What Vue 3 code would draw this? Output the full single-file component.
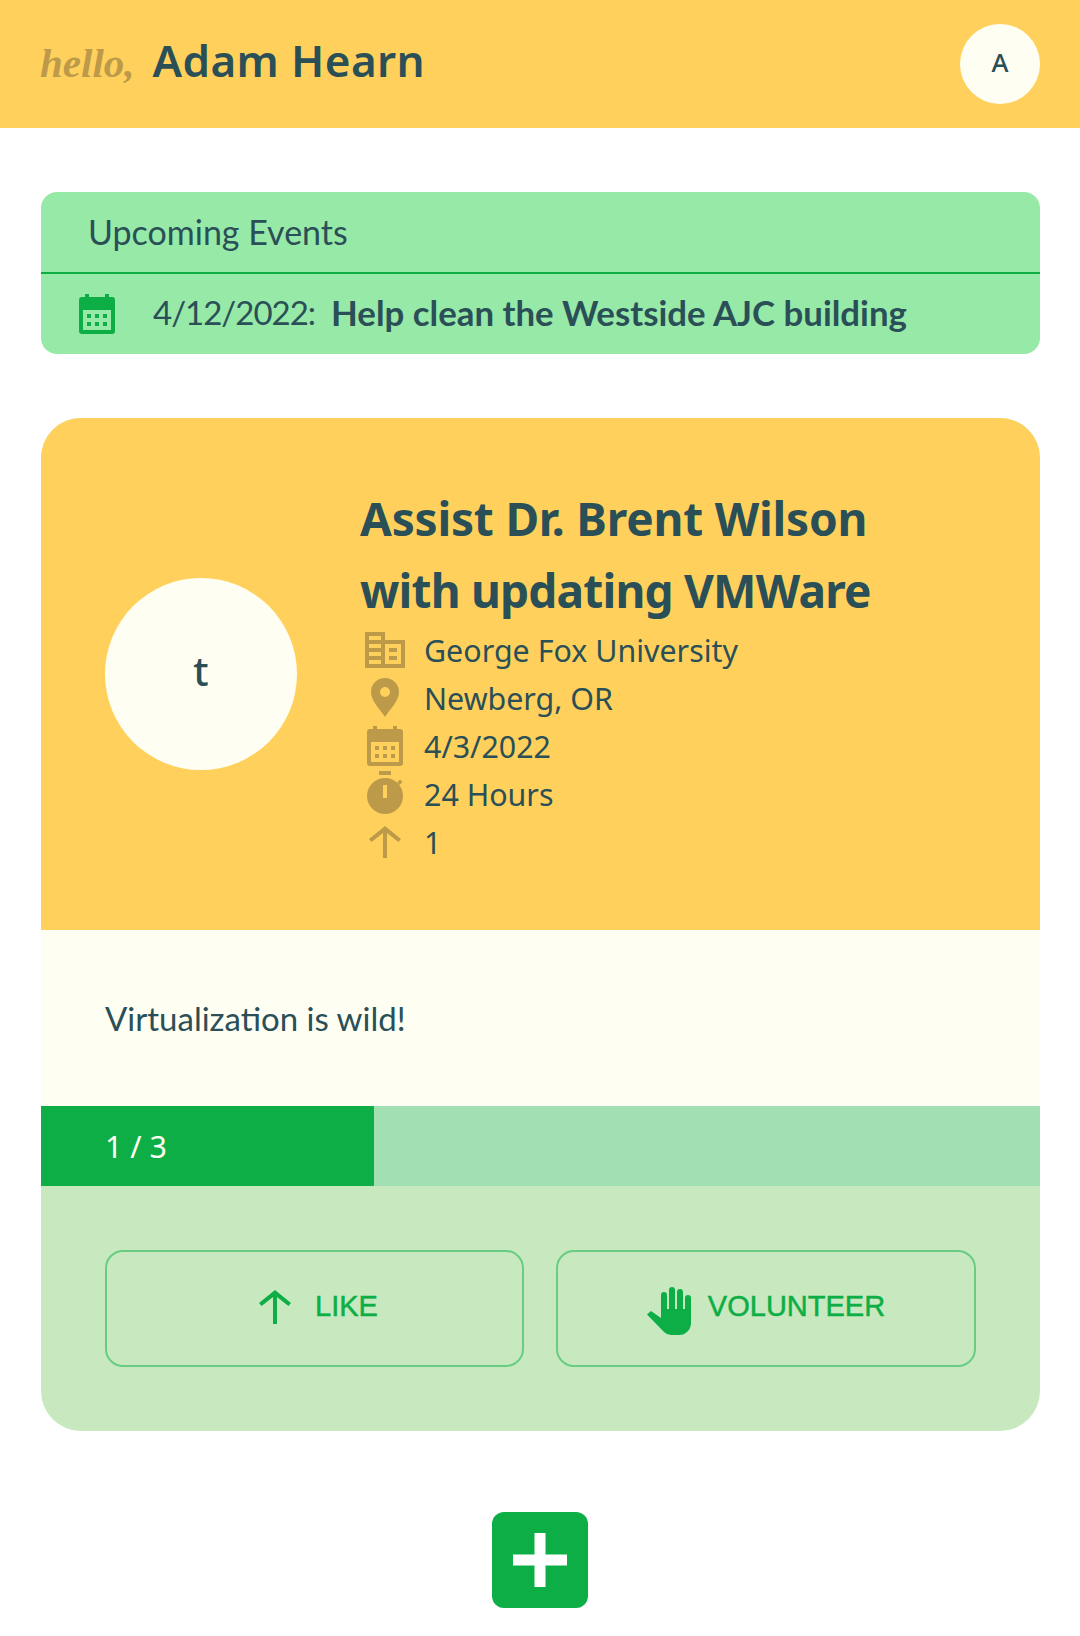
<script setup>
const details = [
  { icon: "building", text: "George Fox University" },
  { icon: "pin", text: "Newberg, OR" },
  { icon: "calendar", text: "4/3/2022" },
  { icon: "timer", text: "24 Hours" },
  { icon: "arrow", text: "1" },
];
</script>

<template>
  <div class="page">
    <header class="top">
      <div class="greeting">
        <span class="hello">hello,</span>
        <span class="name">Adam Hearn</span>
      </div>
      <div class="avatar">A</div>
    </header>

    <section class="events">
      <div class="events-title">Upcoming Events</div>
      <div class="events-row">
        <svg class="events-icon" viewBox="0 0 36 40">
          <path class="cal" fill-rule="evenodd" d="M6 0h4v3h16V0h4v3h3a3 3 0 0 1 3 3v31a3 3 0 0 1-3 3H3a3 3 0 0 1-3-3V6a3 3 0 0 1 3-3h3z M4 16v20h28V16z" />
          <g class="cal">
            <rect x="8" y="20" width="4" height="4" /><rect x="16" y="20" width="4" height="4" /><rect x="24" y="20" width="4" height="4" />
            <rect x="8" y="28" width="4" height="4" /><rect x="16" y="28" width="4" height="4" /><rect x="24" y="28" width="4" height="4" />
          </g>
        </svg>
        <span class="events-date">4/12/2022:</span>
        <span class="events-name">Help clean the Westside AJC building</span>
      </div>
    </section>

    <article class="card">
      <div class="card-top">
        <div class="logo">t</div>
        <div class="info">
          <h1 class="title">
            <span class="title-first">Assist Dr. Brent Wilson</span><br />
            <span class="title-second">with updating VMWare</span>
          </h1>
          <div v-for="item in details" :key="item.icon" class="detail">
            <svg class="detail-icon" viewBox="0 0 40 40">
              <g v-if="item.icon === 'building'">
                <path fill-rule="evenodd" d="M0 2h20v8h20v28H0z M4 6v4h12V6z M4 14v4h12v-4z M4 22v4h12v-4z M4 30v4h12v-4z M20 14v20h16V14z" />
                <rect x="24" y="18" width="8" height="4" /><rect x="24" y="26" width="8" height="4" />
              </g>
              <path v-else-if="item.icon === 'pin'" fill-rule="evenodd" d="M20 0a14 14 0 0 1 14 14c0 9-9 17-14 25C15 31 6 23 6 14A14 14 0 0 1 20 0z M20 9a5 5 0 1 0 0 10 5 5 0 0 0 0-10z" />
              <g v-else-if="item.icon === 'calendar'">
                <path fill-rule="evenodd" d="M8 0h4v3h16V0h4v3h3a3 3 0 0 1 3 3v31a3 3 0 0 1-3 3H5a3 3 0 0 1-3-3V6a3 3 0 0 1 3-3h3z M6 16v20h28V16z" />
                <rect x="10" y="20" width="4" height="4" /><rect x="18" y="20" width="4" height="4" /><rect x="26" y="20" width="4" height="4" />
                <rect x="10" y="28" width="4" height="4" /><rect x="18" y="28" width="4" height="4" /><rect x="26" y="28" width="4" height="4" />
              </g>
              <g v-else-if="item.icon === 'timer'">
                <rect x="14" y="-3" width="12" height="4" />
                <path fill-rule="evenodd" d="M20 4a18 18 0 1 1 0 36 18 18 0 0 1 0-36z M18 11v13h4V11z" />
                <path d="M32 8.500l3-3 2.500 2.500-3 3z" />
              </g>
              <path v-else d="M20 4l16 13-2.600 3L22 11v25h-4V11L6.600 20 4 17z" />
            </svg>
            <span class="detail-text">{{ item.text }}</span>
          </div>
        </div>
      </div>

      <div class="description">Virtualization is wild!</div>

      <div class="progress">
        <div class="progress-fill" :style="{ width: (1 / 3) * 100 + '%' }">1 / 3</div>
      </div>

      <div class="actions">
        <button class="action like">
          <svg class="action-icon" viewBox="0 0 40 40">
            <path d="M20 3l16 13-2.600 3L22 10v27h-4V10L6.600 19 4 16z" />
          </svg>
          LIKE
        </button>
        <button class="action">
          <svg class="hand" viewBox="0 0 44 48">
            <path d="M14 8a3 3 0 0 1 6 0V22h2V3a3 3 0 0 1 6 0V22h2V5a3 3 0 0 1 6 0V22h2V11a3 3 0 0 1 6 0V36a12 12 0 0 1-12 12H24a10 10 0 0 1-7-3L0 27.500 4 24l10 7z" />
          </svg>
          VOLUNTEER
        </button>
      </div>
    </article>

    <div class="add-wrap">
      <button class="add" aria-label="Add">
        <svg viewBox="0 0 54 54" class="add-icon">
          <path d="M21.500 0h11v21.500h21.500v11H32.500V54h-11V32.500H0v-11h21.500z" />
        </svg>
      </button>
    </div>
  </div>
</template>

<style>
body {
  margin: 0;
  background: #fff;
}
</style>

<style scoped>
.page {
  width: 1080px;
  height: 1636px;
  overflow: hidden;
  background: #fff;
  color: #2a4f57;
  font-family: "Open Sans", "Noto Sans", sans-serif;
}

.top {
  height: 128px;
  box-sizing: border-box;
  padding: 0 40px;
  background: #ffd15c;
  display: flex;
  align-items: center;
  justify-content: space-between;
}

.greeting {
  display: flex;
  align-items: baseline;
  gap: 18px;
  padding-bottom: 8px;
}

.hello {
  font-family: "Liberation Serif", serif;
  font-style: italic;
  font-weight: 700;
  font-size: 41px;
  color: #bc9a4a;
}

.name {
  font-family: "Noto Sans", sans-serif;
  font-size: 44px;
  font-weight: 600;
  letter-spacing: 0.4px;
}

.avatar {
  width: 80px;
  height: 80px;
  box-sizing: border-box;
  padding-bottom: 4px;
  border-radius: 50%;
  background: #fffef2;
  display: flex;
  align-items: center;
  justify-content: center;
  font-family: "Noto Sans", sans-serif;
  font-size: 26px;
  font-weight: 500;
}

.events {
  margin: 64px 40px 0 41px;
  height: 162px;
  border-radius: 16px;
  background: #97e9a8;
  font-family: Lato, sans-serif;
}

.events-title {
  height: 82px;
  box-sizing: border-box;
  padding: 0 0 2px 47px;
  border-bottom: 2px solid #0dae46;
  display: flex;
  align-items: center;
  font-size: 34px;
}

.events-row {
  height: 80px;
  box-sizing: border-box;
  padding-bottom: 4px;
  display: flex;
  align-items: center;
  font-size: 34.8px;
}

.events-icon {
  width: 36px;
  height: 40px;
  margin: 4px 38px 0;
}

.cal {
  fill: #0dae46;
}

.events-date {
  margin-right: 16px;
  font-size: 33px;
  letter-spacing: -1px;
}

.events-name {
  font-weight: 700;
}

.card {
  margin: 64px 40px 0 41px;
  height: 1013px;
  border-radius: 40px;
  overflow: hidden;
  background: #c8e9bf;
}

.card-top {
  height: 512px;
  box-sizing: border-box;
  padding: 64px 64px 0;
  background: #ffd15c;
  display: flex;
}

.logo {
  width: 192px;
  height: 192px;
  box-sizing: border-box;
  padding-bottom: 8px;
  margin-top: 96px;
  border-radius: 50%;
  background: #fffef2;
  display: flex;
  align-items: center;
  justify-content: center;
  font-family: "Noto Sans", sans-serif;
  font-size: 40px;
  font-weight: 500;
  flex-shrink: 0;
}

.info {
  margin-left: 63px;
}

.title {
  margin: 0;
  font-family: "Noto Sans", sans-serif;
  font-size: 46px;
  line-height: 72px;
  font-weight: 700;
}

.title-first {
  letter-spacing: -0.2px;
}

.title-second {
  letter-spacing: -0.8px;
}

.detail {
  height: 48px;
  display: flex;
  align-items: center;
  font-family: "Noto Sans", sans-serif;
  font-size: 30.4px;
}

.detail-icon {
  width: 40px;
  height: 40px;
  overflow: visible;
  fill: #bc9a4a;
  margin-left: 5px;
  margin-right: 19px;
  flex-shrink: 0;
}

.description {
  height: 176px;
  box-sizing: border-box;
  padding-left: 64px;
  background: #fffef2;
  display: flex;
  align-items: center;
  font-family: Lato, sans-serif;
  font-size: 33px;
}

.progress {
  height: 80px;
  background: #a2dfb3;
}

.progress-fill {
  height: 100%;
  box-sizing: border-box;
  padding-left: 64px;
  background: #0dae46;
  color: #fffef2;
  display: flex;
  align-items: center;
  font-family: "Noto Sans", sans-serif;
  font-size: 30.4px;
}

.actions {
  padding: 64px 64px 0;
  display: grid;
  grid-template-columns: 419px 420px;
  gap: 32px;
}

.action {
  height: 117px;
  padding: 0 0 4px;
  border: 2px solid #68cd82;
  border-radius: 18px;
  background: transparent;
  color: #0dae46;
  display: flex;
  align-items: center;
  justify-content: center;
  gap: 17px;
  font-family: "Liberation Sans", sans-serif;
  font-size: 29px;
  -webkit-text-stroke: 0.5px #0dae46;
}

.like {
  gap: 20px;
  padding-left: 4px;
}

.action-icon {
  width: 40px;
  height: 40px;
  fill: #0dae46;
}

.hand {
  width: 44px;
  height: 48px;
  margin-top: 8px;
  fill: #0dae46;
}

.add-wrap {
  margin-top: 81px;
  display: flex;
  justify-content: center;
}

.add {
  width: 96px;
  height: 96px;
  padding: 0;
  border: 0;
  border-radius: 12px;
  background: #0dae46;
  display: flex;
  align-items: center;
  justify-content: center;
}

.add-icon {
  width: 54px;
  height: 54px;
  fill: #fff;
}
</style>
